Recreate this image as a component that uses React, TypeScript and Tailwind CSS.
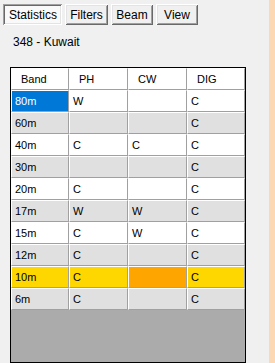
const TABS = [
  { label: 'Statistics', width: 'w-[59px]', active: true },
  { label: 'Filters', width: 'w-[43px]', active: false },
  { label: 'Beam', width: 'w-[42px]', active: false },
  { label: 'View', width: 'w-[42px]', active: false },
];

const COLUMNS = ['Band', 'PH', 'CW', 'DIG'];
const COL_WIDTHS = ['w-[58px]', 'w-[59px]', 'w-[59px]', 'w-[58px]'];

type Row = { band: string; ph: string; cw: string; dig: string };

const ROWS: Row[] = [
  { band: '80m', ph: 'W', cw: '', dig: 'C' },
  { band: '60m', ph: '', cw: '', dig: 'C' },
  { band: '40m', ph: 'C', cw: 'C', dig: 'C' },
  { band: '30m', ph: '', cw: '', dig: 'C' },
  { band: '20m', ph: 'C', cw: '', dig: 'C' },
  { band: '17m', ph: 'W', cw: 'W', dig: 'C' },
  { band: '15m', ph: 'C', cw: 'W', dig: 'C' },
  { band: '12m', ph: 'C', cw: '', dig: 'C' },
  { band: '10m', ph: 'C', cw: '', dig: 'C' },
  { band: '6m', ph: 'C', cw: '', dig: 'C' },
];

const cellBase =
  'h-[22px] flex items-center border-t border-l border-t-white border-l-white border-b border-r border-b-[#a0a0a0] border-r-[#a0a0a0] pl-[3px] text-[11px] leading-none';

function cellColor(row: Row, idx: number, col: number) {
  if (row.band === '80m' && col === 0) return 'bg-[#0078d7] text-white';
  if (row.band === '10m') return col === 2 ? 'bg-[#ffa500] text-black' : 'bg-[#ffd700] text-black';
  return idx % 2 === 0 ? 'bg-white text-black' : 'bg-[#e0e0e0] text-black';
}

export default function App() {
  return (
    <div className="flex h-[363px] w-[275px] overflow-hidden bg-[#f0f0f0] font-['Liberation_Sans',Arial,sans-serif] text-black">
      <div className="flex flex-1 flex-col">
        <div className="flex gap-[3px] pl-[3px] pt-[4px]">
          {TABS.map((tab) => (
            <button
              key={tab.label}
              type="button"
              className={
                tab.active
                  ? `${tab.width} flex h-[21px] items-center justify-center pl-px pt-px text-[12px] bg-[#f9f9f9] shadow-[inset_1px_1px_#a0a0a0,inset_-1px_-1px_#ffffff,inset_2px_2px_#696969,inset_-2px_-2px_#e3e3e3]`
                  : `${tab.width} flex h-[21px] items-center justify-center text-[12px] bg-[#f0f0f0] shadow-[inset_1px_1px_#ffffff,inset_-1px_-1px_#696969,inset_2px_2px_#e3e3e3,inset_-2px_-2px_#a0a0a0]`
              }
            >
              {tab.label}
            </button>
          ))}
        </div>

        <div className="pl-[13px] pt-[10px] text-[12px] leading-[15px]">348 - Kuwait</div>

        <div className="ml-[10px] mt-[17px] flex h-[320px] w-[236px] flex-col border border-black bg-[#ababab]">
          <div className="flex">
            {COLUMNS.map((c, i) => (
              <div
                key={c}
                className={`${COL_WIDTHS[i]} ${cellBase} bg-white pl-[9px]`}
              >
                {c}
              </div>
            ))}
          </div>
          {ROWS.map((row, idx) => {
            const values = [row.band, row.ph, row.cw, row.dig];
            return (
              <div key={row.band} className="flex">
                {values.map((v, col) => (
                  <div
                    key={col}
                    className={`${COL_WIDTHS[col]} ${cellBase} ${cellColor(row, idx, col)}`}
                  >
                    {v}
                  </div>
                ))}
              </div>
            );
          })}
        </div>
      </div>
      <div className="w-[6px] bg-[#fdd8b5]" />
    </div>
  );
}
